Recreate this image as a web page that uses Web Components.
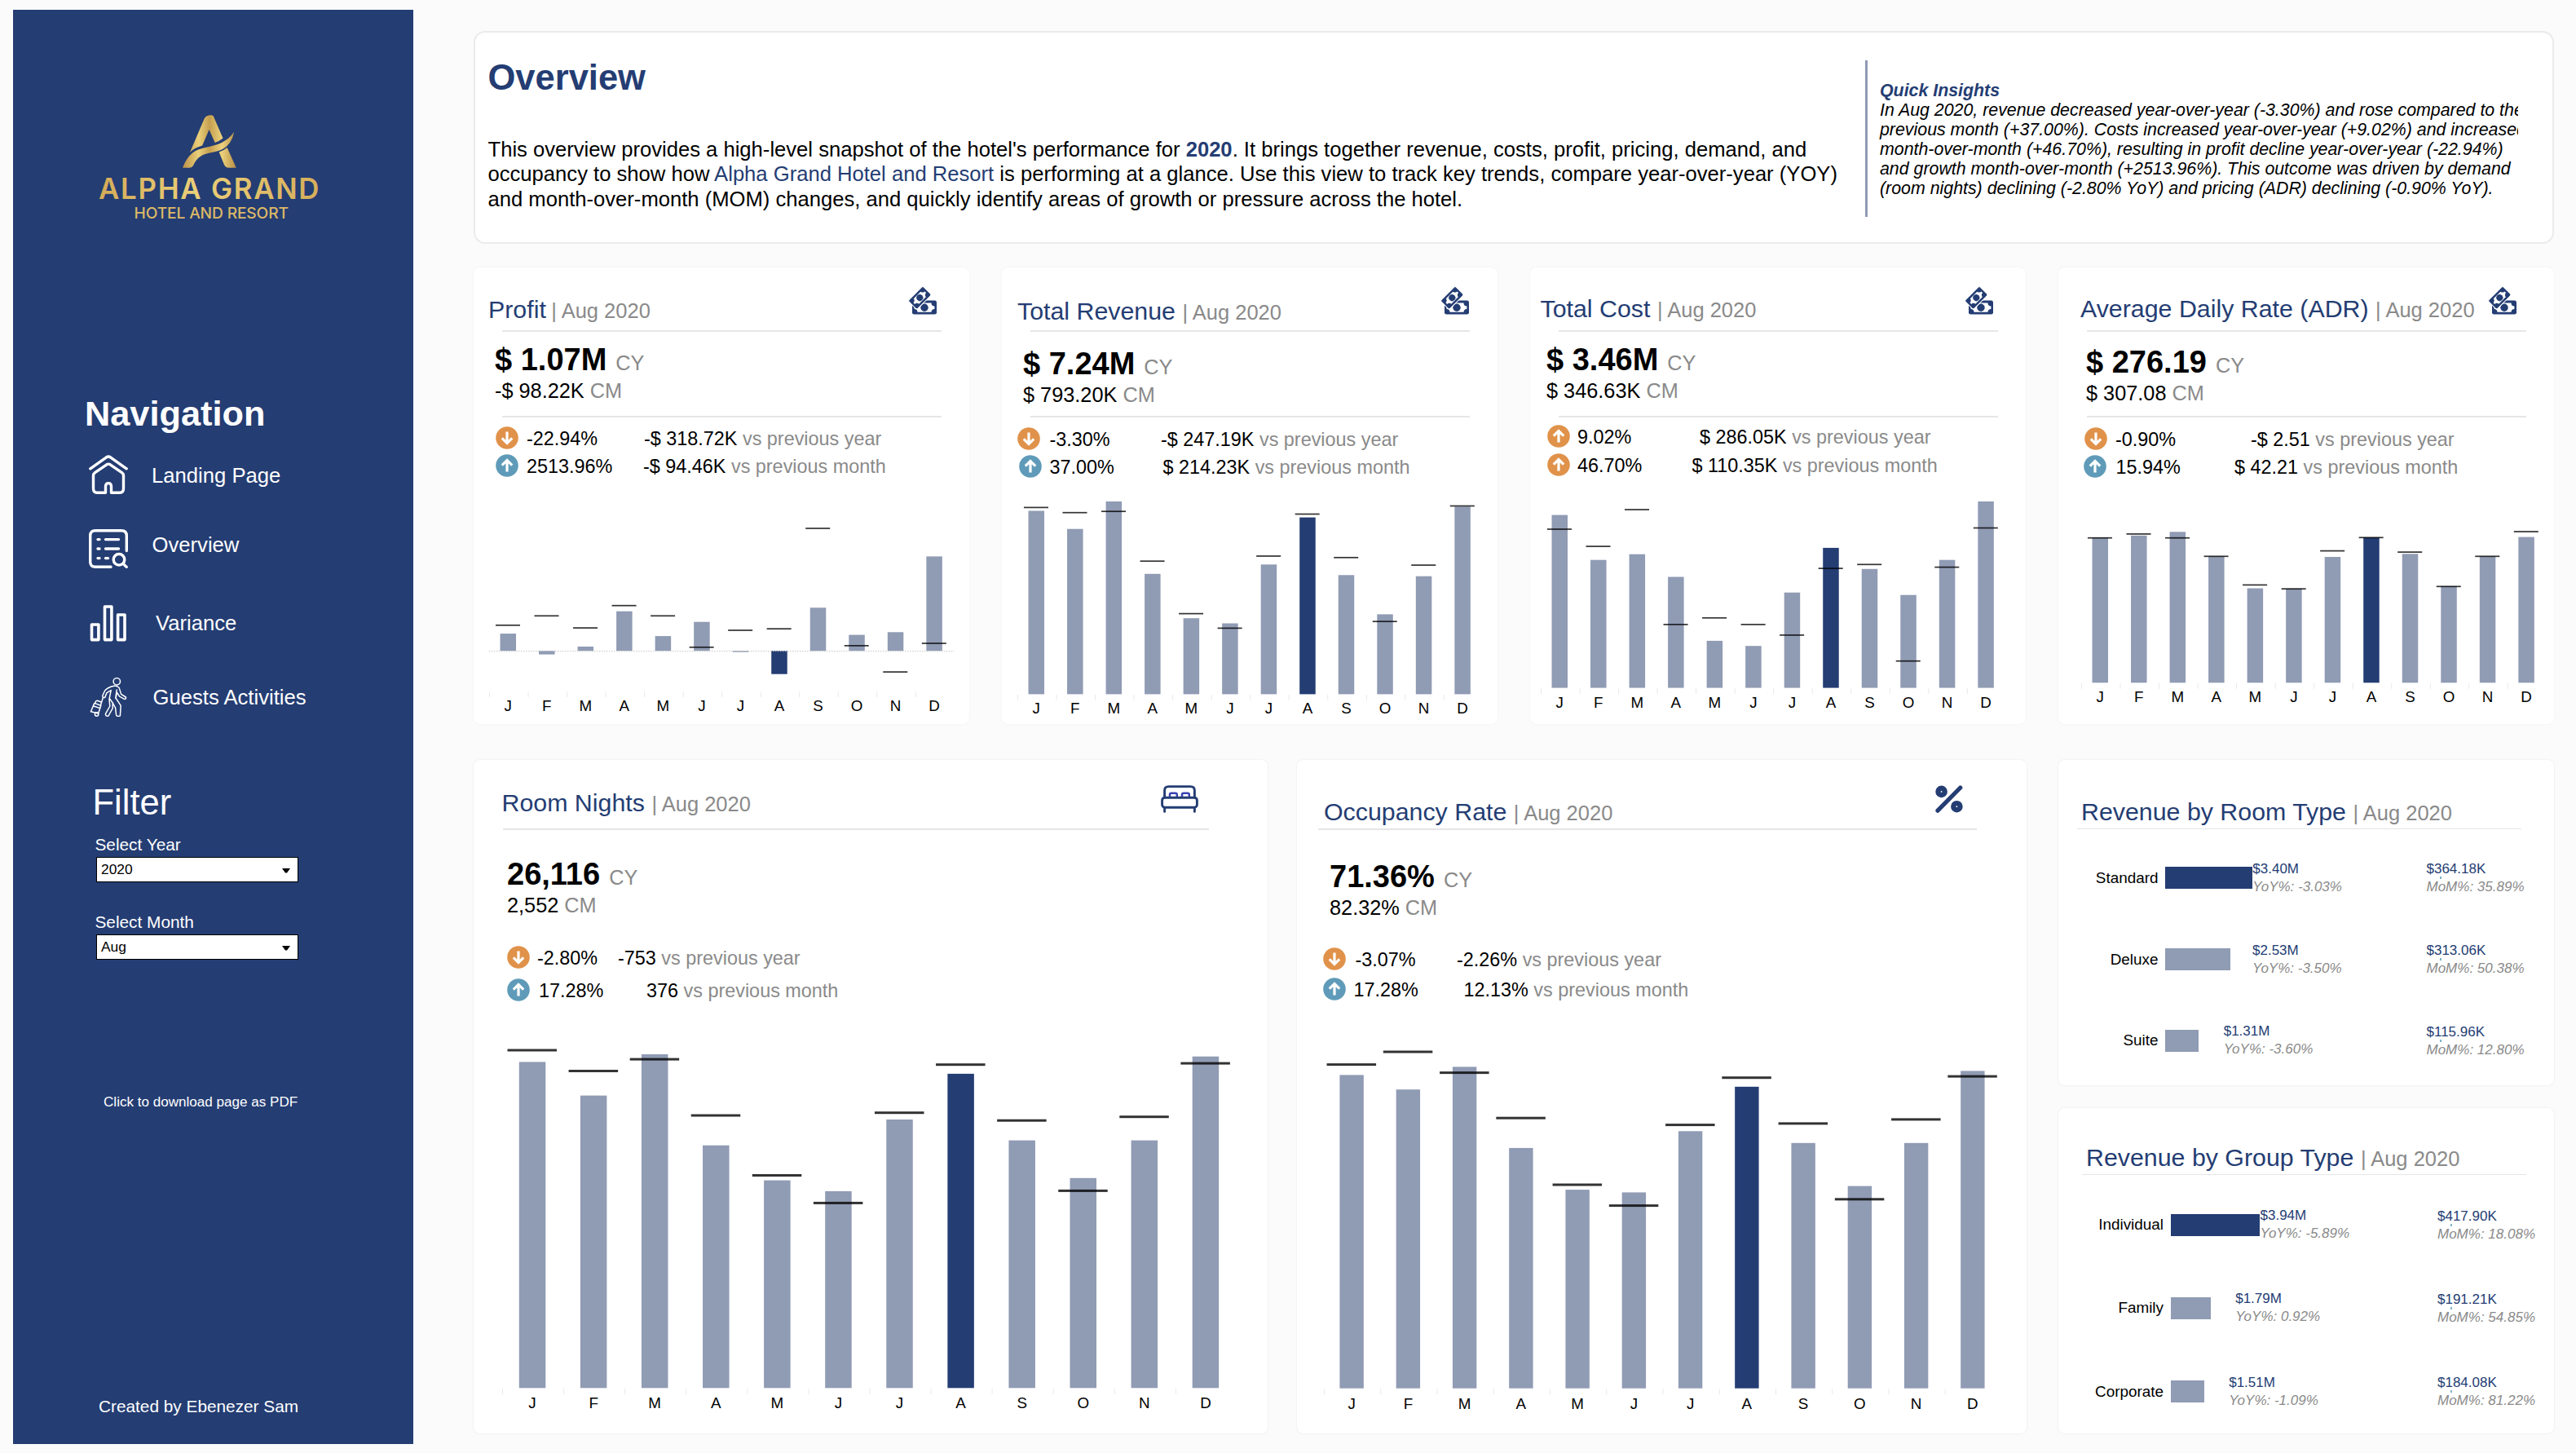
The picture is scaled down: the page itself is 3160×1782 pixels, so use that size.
<!DOCTYPE html>
<html lang="en">
<head>
<meta charset="utf-8">
<title>Alpha Grand Hotel and Resort - Overview</title>
<style>
    html, body { margin: 0; padding: 0; }

    body {
        --navy: #243d73;
        --slate: #909bb4;
        --muted: #8a8a8a;
        --rule: #e6e6e6;
        width: 3160px;
        height: 1782px;
        overflow: hidden;
        background: #fbfbfb;
        color: #000;
        font-family: "Liberation Sans", Arial, sans-serif;
    }
</style>
</head>
<body>
<hotel-dashboard></hotel-dashboard>

<script>
const MONTHS = ['J', 'F', 'M', 'A', 'M', 'J', 'J', 'A', 'S', 'O', 'N', 'D'];
const SELECTED_MONTH = 7;

const ICONS = {
    home: `<svg viewBox="0 0 48 48" width="48" height="48" fill="none" stroke="#fff" stroke-width="3.4" stroke-linecap="round" stroke-linejoin="round">
        <path d="M1.8 16.8 21.5 2.8Q24 1.2 26.5 2.8L46.2 16.8"/>
        <path d="M20.5 46.3H10Q5.5 46.3 5.5 41V25.5Q5.5 23 7.5 21.6L21.8 11.8Q24 10.4 26.2 11.8L40.5 21.6Q42.5 23 42.5 25.5V41Q42.5 46.3 38 46.3H27.5V38.5Q27.5 34.6 24 34.6T20.5 38.5Z"/>
    </svg>`,
    list: `<svg viewBox="0 0 48 48" width="48" height="48" fill="none" stroke="#fff" stroke-width="3.4" stroke-linecap="round">
        <path d="M27 46.3H8Q1.7 46.3 1.7 40V8Q1.7 1.7 8 1.7H40Q46.3 1.7 46.3 8V26.5"/>
        <path d="M11 12.6h2M20.5 12.6h16M11 24h2M20.5 24h16M11 35.6h2M20.5 35.6h3"/>
        <circle cx="37" cy="37.3" r="6.8"/>
        <path d="M42.3 42.6 46.2 46.4"/>
    </svg>`,
    bars: `<svg viewBox="0 0 48 48" width="48" height="48" fill="none" stroke="#fff" stroke-width="3.6" stroke-linejoin="round">
        <path d="M3.5 26h8.4v18.6H3.5zM19.5 4h8.4v40.6h-8.4zM35.6 14H44v30.6h-8.4z"/>
    </svg>`,
    guest: `<svg viewBox="0 0 48 48" width="48" height="48" fill="none" stroke="#fff" stroke-width="1.5" stroke-linecap="round" stroke-linejoin="round">
        <circle cx="34.3" cy="4.8" r="4.2"/>
        <path d="M31 10.3Q24 11.5 19.6 16L16.7 22.5Q16.8 24.8 19.6 24.6L22 18.6 27.2 15.6 25 26.4 25.8 35 20.4 44.6Q20.6 47.8 24 47L29.2 37.6V31L32.6 37.2 33.6 46Q35 48.6 38.4 46.8L39.2 34.4 33 25 34.6 18.4 37.6 23.2 44 26.6Q46 26 45.4 24L39.6 20.4 37.2 12.6Q35.4 9.8 31 10.3M25.4 25.6 29.2 31M32.8 25.2 34.2 15"/>
        <path d="M6.8 31.4 14.8 34.2 11.6 44 2.4 41.8ZM8.2 31.6Q7.6 28.4 10.4 28.2L14.4 29.8M6 35l7.8 2.6M17.4 24.6 14.4 34"/>
        <circle cx="9.6" cy="45" r="2.2"/>
    </svg>`,
    money: `<svg viewBox="0 0 35 35" width="35" height="35">
        <rect x="5" y="17.6" width="30" height="17" rx="2.4" fill="#243d73"/>
        <path d="M11.5 20.6H28.5A4 4 0 0 0 32.4 24.6V28A4 4 0 0 0 28.5 31.8H11.5A4 4 0 0 0 7.6 28V24.6A4 4 0 0 0 11.5 20.6Z" fill="#fff"/>
        <circle cx="20" cy="26.3" r="4.7" fill="#243d73"/>
        <g transform="translate(14.3 14.2) rotate(-45)">
            <rect x="-12.8" y="-7.6" width="25.6" height="15.2" rx="2.2" fill="#243d73" stroke="#fff" stroke-width="1"/>
            <path d="M-6-4.6H6A4 4 0 0 0 9.8-1.2V1.2A4 4 0 0 0 6 4.6H-6A4 4 0 0 0-9.8 1.2V-1.2A4 4 0 0 0-6-4.600Z" fill="#fff"/>
            <circle r="4" fill="#243d73"/>
        </g>
    </svg>`,
    bed: `<svg viewBox="0 0 46 34" width="46" height="34" fill="none" stroke="#243d73" stroke-width="2.9" stroke-linecap="round" stroke-linejoin="round">
        <path d="M4.6 15V6.5Q4.6 1.6 9.6 1.6H36.4Q41.4 1.6 41.4 6.5V15"/>
        <path d="M11 14.6V11.6Q11 9.8 12.8 9.8H18Q19.8 9.8 19.8 11.6V14.6M26 14.6V11.6Q26 9.8 27.8 9.8H33Q34.8 9.8 34.8 11.6V14.6" stroke="#3a42b4" stroke-width="2.5"/>
        <rect x="1.6" y="15.2" width="42.8" height="12" rx="3.2"/>
        <path d="M4.6 27.4V32.4M41.4 27.4V32.4"/>
    </svg>`,
    percent: `<svg viewBox="0 0 34 34" width="34" height="34" fill="none" stroke="#243d73" stroke-linecap="round">
        <path d="M3 31.2 30.8 3" stroke-width="5.2"/>
        <circle cx="7.6" cy="7.9" r="4.1" stroke-width="6.4"/>
        <circle cx="26.4" cy="26.2" r="4.1" stroke-width="6.4"/>
    </svg>`
};

class BrandLogo extends HTMLElement {
    constructor() {
        super();
        this.attachShadow({ mode: 'open' });
    }

    connectedCallback() {
        this.shadowRoot.innerHTML = `
            <style>
                :host { display: block; }
                svg { display: block; }
                text { font-family: Inter, Lato, "Liberation Sans", sans-serif; }
            </style>
            <svg width="491" height="140" viewBox="16 141 491 140">
                <defs>
                    <linearGradient id="mark" x1="224" x2="290" y1="0" y2="0" gradientUnits="userSpaceOnUse">
                        <stop offset="0" stop-color="#b98f48"/>
                        <stop offset=".3" stop-color="#ebd07a"/>
                        <stop offset=".5" stop-color="#c59f50"/>
                        <stop offset=".73" stop-color="#ecd27c"/>
                        <stop offset="1" stop-color="#b48a45"/>
                    </linearGradient>
                    <linearGradient id="word" x1="121" x2="391" y1="0" y2="0" gradientUnits="userSpaceOnUse">
                        <stop offset="0" stop-color="#d4ab58"/>
                        <stop offset=".45" stop-color="#ebd07a"/>
                        <stop offset="1" stop-color="#d6ae5a"/>
                    </linearGradient>
                </defs>
                <g fill="url(#mark)" transform="translate(0 141)">
                    <path d="M233 45.7 250 6Q252 .4 258 .2 260.8 0 261.8 1.5L273.500 28.500Q268.500 32.600 263.700 34L256.500 18 248.200 37.500Q239 40 233 45.700Z"/>
                    <path d="M224 64.700Q231 46.500 244 42.200C258 37.500 275 38 287.300 20.700Q284 36.500 272.500 42.200C260 48 246 44 238 60Q236.500 64.700 232 64.700Z"/>
                    <path d="M268.600 45.600Q274 44 278.600 40L289.800 64.700H280.500Q276.500 64.500 275 61Z"/>
                </g>
                <text x="121" y="243.700" font-size="34.800" font-weight="600" fill="url(#word)" textLength="270.500" lengthAdjust="spacing">ALPHA GRAND</text>
                <text x="164.500" y="267.800" font-size="19.200" font-weight="500" fill="#dcb967" textLength="189.500" lengthAdjust="spacing">HOTEL AND RESORT</text>
            </svg>
        `;
    }
}

customElements.define('brand-logo', BrandLogo);

class NavItem extends HTMLElement {
    constructor() {
        super();
        this.attachShadow({ mode: 'open' });
    }

    connectedCallback() {
        this.shadowRoot.innerHTML = `
            <style>
                :host {
                    display: flex;
                    align-items: center;
                    height: 91px;
                    padding-left: 93px;
                    font-size: 25.650px;
                    color: #fff;
                    cursor: pointer;
                }
                svg { display: block; flex: none; }
                span { padding-left: var(--gap, 29px); padding-top: var(--down, 0); padding-bottom: var(--up, 0); }
            </style>
            ${ICONS[this.getAttribute('icon')]}
            <span><slot></slot></span>
        `;
    }
}

customElements.define('nav-item', NavItem);

class FilterSelect extends HTMLElement {
    constructor() {
        super();
        this.attachShadow({ mode: 'open' });
    }

    connectedCallback() {
        this.shadowRoot.innerHTML = `
            <style>
                :host { display: block; padding-left: 100px; width: 251px; }
                .label { line-height: 26px; font-size: 20.800px; padding-left: .5px; }
                .box {
                    display: flex;
                    align-items: center;
                    justify-content: space-between;
                    box-sizing: border-box;
                    width: 248px;
                    height: 31px;
                    margin: 2px 0 0 2px;
                    padding: 0 9px 0 5px;
                    border: 1px solid #000;
                    background: #fff;
                    color: #000;
                    font-size: 17.400px;
                }
                svg { margin-top: 3px; }
            </style>
            <div class="label">${this.getAttribute('label')}</div>
            <div class="box">
                <slot></slot>
                <svg width="10" height="6" viewBox="0 0 10 6"><path d="M0 0h10L6 5.500H4z"/></svg>
            </div>
        `;
    }
}

customElements.define('filter-select', FilterSelect);

class SideBar extends HTMLElement {
    constructor() {
        super();
        this.attachShadow({ mode: 'open' });
    }

    connectedCallback() {
        this.shadowRoot.innerHTML = `
            <style>
                :host {
                    display: flex;
                    flex-direction: column;
                    box-sizing: border-box;
                    width: 491px;
                    height: 1759px;
                    padding: 129px 0 33px;
                    background: var(--navy);
                    color: #fff;
                }
                h2 { margin: 0; font-size: 43.500px; line-height: 50px; }
                .nav-title { margin-top: 201px; padding-left: 88px; font-size: 43.300px; }
                nav { margin-top: 4px; }
                .filter-title { margin-top: 59px; padding-left: 97.500px; font-weight: normal; }
                .year { margin-top: 14px; }
                .month { margin-top: 36px; }
                .pdf { margin-top: 163px; padding-left: 111px; font-size: 17.080px; line-height: 24px; }
                .author { margin-top: auto; padding-left: 105px; font-size: 20.800px; line-height: 26px; }
            </style>
            <brand-logo></brand-logo>
            <h2 class="nav-title">Navigation</h2>
            <nav>
                <nav-item icon="home" style="--down: 4px">Landing Page</nav-item>
                <nav-item icon="list" style="--up: 8px; --gap: 29.500px">Overview</nav-item>
                <nav-item icon="bars" style="--gap: 34px; --down: 2px">Variance</nav-item>
                <nav-item icon="guest" style="--gap: 30.500px; --down: 2px">Guests Activities</nav-item>
            </nav>
            <h2 class="filter-title">Filter</h2>
            <filter-select class="year" label="Select Year">2020</filter-select>
            <filter-select class="month" label="Select Month">Aug</filter-select>
            <div class="pdf">Click to download page as PDF</div>
            <div class="author">Created by Ebenezer Sam</div>
        `;
    }
}

customElements.define('side-bar', SideBar);

class OverviewHeader extends HTMLElement {
    constructor() {
        super();
        this.attachShadow({ mode: 'open' });
    }

    connectedCallback() {
        this.shadowRoot.innerHTML = `
            <style>
                :host {
                    display: flex;
                    box-sizing: border-box;
                    width: 2552px;
                    height: 261px;
                    border: 2px solid #ebebeb;
                    border-radius: 14px;
                    background: #fff;
                }
                .intro { width: 1705px; padding: 30px 0 0 15.500px; box-sizing: border-box; white-space: nowrap; }
                h1 { margin: 0 0 48px; font-size: 43.500px; line-height: 50px; color: var(--navy); }
                p { margin: 0; font-size: 25.610px; line-height: 30.400px; }
                b, .hotel { color: var(--navy); }
                .insights {
                    width: 801px;
                    height: 192px;
                    margin-top: 34px;
                    padding: 24.600px 0 0 15px;
                    box-sizing: border-box;
                    border-left: 3px solid var(--slate);
                    overflow: hidden;
                    white-space: nowrap;
                    font-size: 21.350px;
                    font-style: italic;
                    line-height: 24.050px;
                }
            </style>
            <div class="intro">
                <h1>Overview</h1>
                <p>This overview provides a high-level snapshot of the hotel's performance for <b>2020</b>. It brings together revenue, costs, profit, pricing, demand, and<br>
                occupancy to show how <span class="hotel">Alpha Grand Hotel and Resort</span> is performing at a glance. Use this view to track key trends, compare year-over-year (YOY)<br>
                and month-over-month (MOM) changes, and quickly identify areas of growth or pressure across the hotel.</p>
            </div>
            <div class="insights">
                <b>Quick Insights</b><br>
                In Aug 2020, revenue decreased year-over-year (-3.30%) and rose compared to the<br>
                previous month (+37.00%). Costs increased year-over-year (+9.02%) and increased<br>
                month-over-month (+46.70%), resulting in profit decline year-over-year (-22.94%)<br>
                and growth month-over-month (+2513.96%). This outcome was driven by demand<br>
                (room nights) declining (-2.80% YoY) and pricing (ADR) declining (-0.90% YoY).
            </div>
        `;
    }
}

customElements.define('overview-header', OverviewHeader);

// Heading, period and the thin line under them; shared by every card
class CardTitle extends HTMLElement {
    constructor() {
        super();
        this.attachShadow({ mode: 'open' });
    }

    connectedCallback() {
        const icon = this.getAttribute('icon');
        this.shadowRoot.innerHTML = `
            <style>
                :host {
                    display: flex;
                    justify-content: space-between;
                    box-sizing: border-box;
                    height: var(--head, 77px);
                    flex: none;
                }
                .text {
                    display: flex;
                    align-items: baseline;
                    height: 36px;
                    margin: var(--title-top) 0 0 var(--title-left);
                    line-height: 36px;
                    white-space: nowrap;
                }
                .name { font-size: 30.350px; color: var(--navy); }
                .period { margin-left: var(--period-gap, 8.500px); font-size: 25.500px; color: var(--muted); }
                .icon { margin: var(--icon-top, 23px) var(--icon-right) 0 0; }
                svg { display: block; }
            </style>
            <div class="text">
                <span class="name"><slot></slot></span>
                <span class="period">| Aug 2020</span>
            </div>
            ${icon ? `<div class="icon">${ICONS[icon]}</div>` : ''}
        `;
    }
}

customElements.define('card-title', CardTitle);

class ChangeRow extends HTMLElement {
    constructor() {
        super();
        this.attachShadow({ mode: 'open' });
    }

    connectedCallback() {
        const up = this.getAttribute('direction') === 'up';
        const color = this.hasAttribute('good') ? '#5f9bb9' : '#e0924a';
        this.shadowRoot.innerHTML = `
            <style>
                :host {
                    display: flex;
                    align-items: center;
                    height: var(--row, 34.300px);
                    padding-left: var(--x, 27px);
                    font-size: 23.400px;
                    line-height: 34px;
                    white-space: nowrap;
                }
                svg { flex: none; margin-top: -2px; }
                .percent { box-sizing: border-box; width: var(--col, 152px); padding-left: var(--pad, 10px); flex: none; }
                .note { color: var(--muted); }
            </style>
            <svg width="28" height="28" viewBox="0 0 28 28">
                <circle cx="14" cy="14" r="13.800" fill="${color}"/>
                <path d="${up ? 'M14 21.500V8M7.800 13.600 14 7.400l6.200 6.200' : 'M14 6.500V20M7.800 14.400 14 20.600l6.200-6.200'}" fill="none" stroke="#fff" stroke-width="3.200"/>
            </svg>
            <span class="percent"><slot></slot></span>
            <span>${this.getAttribute('delta')} <span class="note">vs previous ${this.getAttribute('versus')}</span></span>
        `;
    }
}

customElements.define('change-row', ChangeRow);

// Monthly columns with a tick for the previous year's value
class MonthChart extends HTMLElement {
    constructor() {
        super();
        this.attachShadow({ mode: 'open' });
    }

    connectedCallback() {
        const num = (name, fallback) => parseFloat(this.getAttribute(name) || fallback);
        const list = name => this.getAttribute(name).split(',').map(Number);
        const bars = list('bars');
        const marks = list('marks');
        const pitch = num('pitch', 47.53);
        const barWidth = num('bar-width', 19.5);
        const markWidth = num('mark-width', 30);
        const stroke = num('mark-stroke', 1.7);
        const floor = num('floor', 0);
        const labelDrop = num('label-drop', 24);
        const plot = Math.max(...bars, ...marks) + 4;
        const axis = plot + floor;
        const width = pitch * 12;

        let shapes = '';
        MONTHS.forEach((month, i) => {
            const cx = pitch * (i + 0.5) - 0.5;
            const h = bars[i];
            shapes += `<rect x="${cx - barWidth / 2}" y="${plot - Math.max(h, 0)}" width="${barWidth}" height="${Math.abs(h)}" fill="${i === SELECTED_MONTH ? '#243d73' : '#909bb4'}"/>`;
            shapes += `<rect x="${pitch * i}" y="${axis + 0.5}" width="1" height="7" fill="#e9e9e9"/>`;
            shapes += `<text x="${cx}" y="${axis + labelDrop}">${month}</text>`;
        });
        marks.forEach((m, i) => {
            const cx = pitch * (i + 0.5) - 0.8;
            shapes += `<rect x="${cx - markWidth / 2}" y="${plot - m - stroke / 2}" width="${markWidth}" height="${stroke}" fill="#000" fill-opacity=".8"/>`;
        });
        if (floor) {
            shapes += `<line x1="0" x2="${width}" y1="${plot + 0.5}" y2="${plot + 0.5}" stroke="#c4c4c4" stroke-dasharray="1.500 1.500"/>`;
        }

        this.shadowRoot.innerHTML = `
            <style>
                :host { display: block; margin-top: auto; }
                svg { display: block; overflow: visible; }
                text { font-family: "Liberation Sans", Arial, sans-serif; font-size: 18.800px; text-anchor: middle; }
            </style>
            <svg width="${width}" height="${axis + 30}">${shapes}</svg>
        `;
    }
}

customElements.define('month-chart', MonthChart);

class KpiCard extends HTMLElement {
    constructor() {
        super();
        this.attachShadow({ mode: 'open' });
    }

    connectedCallback() {
        this.shadowRoot.innerHTML = `
            <style>
                :host {
                    display: flex;
                    flex-direction: column;
                    box-sizing: border-box;
                    width: var(--width, 608px);
                    height: var(--height, 560px);
                    padding-bottom: var(--bottom);
                    border-radius: 8px;
                    background: #fff;
                    box-shadow: 0 0 3px rgba(0, 0, 0, .05);
                }
                .rule { height: 1.500px; width: var(--rule-width, 539px); margin-left: var(--rule-left, 35px); flex: none; background: var(--rule); }
                .figures { box-sizing: border-box; height: var(--figures, 103px); padding: var(--value-top) 0 0 var(--value-left); flex: none; white-space: nowrap; }
                .current { display: flex; align-items: baseline; height: 40px; line-height: 40px; }
                .current b { font-size: 38px; }
                .unit { margin-left: 11px; font-size: 25.300px; color: var(--muted); }
                .month { font-size: 25.300px; line-height: 36.500px; }
                .month span { color: var(--muted); }
                .second { height: 2px; background: var(--second, var(--rule)); }
                .changes { padding-top: var(--changes-top); }
                .chart { display: flex; margin-top: auto; padding-left: var(--chart-left); }
            </style>
            <card-title icon="${this.getAttribute('icon')}">${this.getAttribute('heading')}</card-title>
            <div class="rule"></div>
            <div class="figures">
                <div class="current"><b>${this.getAttribute('current')}</b><span class="unit">CY</span></div>
                <div class="month">${this.getAttribute('month')} <span>CM</span></div>
            </div>
            <div class="rule second"></div>
            <div class="changes"><slot></slot></div>
            <div class="chart"><slot name="chart"></slot></div>
        `;
    }
}

customElements.define('kpi-card', KpiCard);

class RevenueRow extends HTMLElement {
    constructor() {
        super();
        this.attachShadow({ mode: 'open' });
    }

    connectedCallback() {
        const get = name => this.getAttribute(name);
        this.shadowRoot.innerHTML = `
            <style>
                :host { display: flex; align-items: center; height: var(--row-height); white-space: nowrap; }
                .label { width: var(--label); text-align: right; font-size: 18.900px; margin-right: 8.500px; flex: none; }
                .measure { display: flex; align-items: center; width: var(--measure); flex: none; }
                .bar { width: ${get('bar')}px; height: 27px; background: ${this.hasAttribute('top') ? 'var(--navy)' : 'var(--slate)'}; }
                .amount { margin-left: ${get('gap')}px; }
                .amount, .monthly { font-size: 17px; line-height: 22px; color: var(--navy); }
                .monthly { padding-top: 1px; }
                i { display: block; color: var(--muted); }
                .dot { display: block; width: 2px; height: 3px; margin: -2px 0 -1px 16px; background: #7fb3c8; }
            </style>
            <div class="label"><slot></slot></div>
            <div class="measure">
                <div class="bar"></div>
                <div class="amount">${get('amount')}<i>YoY%: ${get('yoy')}</i></div>
            </div>
            <div class="monthly">${get('monthly')}<span class="dot"></span><i>MoM%: ${get('mom')}</i></div>
        `;
    }
}

customElements.define('revenue-row', RevenueRow);

class RevenueCard extends HTMLElement {
    constructor() {
        super();
        this.attachShadow({ mode: 'open' });
    }

    connectedCallback() {
        this.shadowRoot.innerHTML = `
            <style>
                :host {
                    display: block;
                    width: 608px;
                    height: 399px;
                    border-radius: 8px;
                    background: #fff;
                    box-shadow: 0 0 3px rgba(0, 0, 0, .08);
                }
                .rule { height: 1px; width: 545px; margin-left: var(--rule-left); background: var(--rule); }
                .rows { padding-top: 10px; }
            </style>
            <card-title>${this.getAttribute('heading')}</card-title>
            <div class="rule"></div>
            <div class="rows"><slot></slot></div>
        `;
    }
}

customElements.define('revenue-card', RevenueCard);

class HotelDashboard extends HTMLElement {
    constructor() {
        super();
        this.attachShadow({ mode: 'open' });
    }

    connectedCallback() {
        this.shadowRoot.innerHTML = `
            <style>
                :host { display: flex; align-items: flex-start; }
                side-bar { margin: 12px 0 0 16px; flex: none; }
                main { margin: 38px 0 0 74px; }
                .row { display: flex; }
                .top { gap: 40px; margin-top: 29px; }
                .bottom { margin-top: 44px; }
                .side { display: flex; flex-direction: column; gap: 28px; margin-left: 39px; }

                .top .profit { --title-top: 34px; --title-left: 18px; --period-gap: 6.500px; --icon-right: 40px; --value-top: 14px; --value-left: 26px; --changes-top: 9px; --bottom: 10px; --chart-left: 19px; }
                .top .revenue { --title-top: 36px; --title-left: 19px; --icon-right: 35px; --value-top: 19.500px; --value-left: 26px; --changes-top: 10px; --bottom: 6.500px; --chart-left: 19.300px; }
                .top .cost { --title-top: 32.500px; --title-left: 12.500px; --icon-right: 40px; --value-top: 14px; --value-left: 20px; --changes-top: 7px; --bottom: 14px; --chart-left: 13px; --row: 35px; --x: 21px; }
                .top .adr { --title-top: 32.500px; --title-left: 27px; --icon-right: 46px; --value-top: 17px; --value-left: 34px; --changes-top: 10px; --bottom: 20.500px; --chart-left: 27.500px; }

                .bottom kpi-card {
                    --height: 826px;
                    --head: 84px;
                    --icon-top: 31px;
                    --figures: 124px;
                    --second: transparent;
                    --bottom: 25.500px;
                    box-shadow: 0 0 3px rgba(0, 0, 0, .08);
                }
                .nights { --width: 974px; --title-top: 34.500px; --title-left: 34.500px; --icon-right: 85px; --rule-left: 36px; --rule-width: 866px; --value-top: 34.500px; --value-left: 41px; --changes-top: 11px; --chart-left: 35.300px; --row: 40px; --x: 40.500px; }
                .occupancy { --width: 895px; margin-left: 36px; --title-top: 45.500px; --title-left: 33px; --icon-right: 78px; --rule-left: 26px; --rule-width: 808px; --value-top: 37px; --value-left: 40px; --changes-top: 14.500px; --chart-left: 33px; --row: 37px; --x: 32px; }

                .rooms { --head: 84px; --title-top: 46px; --title-left: 28px; --rule-left: 22.500px; --row-height: 99.800px; --label: 122.500px; --measure: 320.500px; }
                .groups { --head: 81px; --title-top: 42.500px; --title-left: 34px; --rule-left: 28.500px; --row-height: 102.300px; --label: 129px; --measure: 327.500px; }
            </style>
            <side-bar></side-bar>
            <main>
                <overview-header></overview-header>

                <div class="row top">
                    <kpi-card class="profit" heading="Profit" icon="money" current="$ 1.07M" month="-$ 98.22K">
                        <change-row direction="down" delta="-$ 318.72K" versus="year" style="--col: 154px">-22.94%</change-row>
                        <change-row direction="up" good delta="-$ 94.46K" versus="month" style="--col: 153px">2513.96%</change-row>
                        <month-chart slot="chart" floor="49.5"
                            bars="21.1,-4.4,5.2,48.5,18.1,35.5,-1.5,-28.5,52.9,19.6,22.9,115.8"
                            marks="31.4,42.9,28.1,55.5,42.9,4.4,25.2,27,150.2,6.3,-25.9,9.2"></month-chart>
                    </kpi-card>
                    <kpi-card class="revenue" heading="Total Revenue" icon="money" current="$ 7.24M" month="$ 793.20K">
                        <change-row direction="down" delta="-$ 247.19K" versus="year" style="--x: 19px; --pad: 11.500px; --col: 148px">-3.30%</change-row>
                        <change-row direction="up" good delta="$ 214.23K" versus="month" style="--x: 20.500px; --pad: 10px; --col: 149px">37.00%</change-row>
                        <month-chart slot="chart" label-drop="23.3"
                            bars="224.9,202.7,236.4,147.6,93.2,86.9,159.1,216.8,146.1,98,144.7,230.1"
                            marks="229,222.7,224.2,163.2,98.8,81,169.4,220.9,167.6,89.2,158.3,230.9"></month-chart>
                    </kpi-card>
                    <kpi-card class="cost" heading="Total Cost" icon="money" current="$ 3.46M" month="$ 346.63K">
                        <change-row direction="up" delta="$ 286.05K" versus="year" style="--pad: 9px; --col: 159px">9.02%</change-row>
                        <change-row direction="up" delta="$ 110.35K" versus="month" style="--pad: 9px; --col: 149.500px">46.70%</change-row>
                        <month-chart slot="chart"
                            bars="212,156.9,163.9,136.1,57.7,51.4,116.9,171.7,145.8,113.9,156.9,228.6"
                            marks="194.6,173.5,218.6,77.7,85.8,77.7,64.7,146.5,151.3,32.9,148,196.1"></month-chart>
                    </kpi-card>
                    <kpi-card class="adr" heading="Average Daily Rate (ADR)" icon="money" current="$ 276.19" month="$ 307.08">
                        <change-row direction="down" delta="-$ 2.51" versus="year" style="--x: 32px; --col: 176px">-0.90%</change-row>
                        <change-row direction="up" good delta="$ 42.21" versus="month" style="--x: 30.500px; --pad: 12px; --col: 157.500px">15.94%</change-row>
                        <month-chart slot="chart"
                            bars="178,180.5,185,155,115.8,115.4,154.3,178,158,118.4,155,178.7"
                            marks="177.6,182.4,177.6,155,119.9,115.1,161.7,178,160.2,118,155,185.3"></month-chart>
                    </kpi-card>
                </div>

                <div class="row bottom">
                    <kpi-card class="nights" heading="Room Nights" icon="bed" current="26,116" month="2,552">
                        <change-row direction="down" delta="-753" versus="year" style="--pad: 9.500px; --col: 108.500px">-2.80%</change-row>
                        <change-row direction="up" good delta="376" versus="month" style="--pad: 11.500px; --col: 143.500px">17.28%</change-row>
                        <month-chart slot="chart" pitch="75.08" bar-width="32.5" mark-width="60.5" mark-stroke="3" label-drop="25.1"
                            bars="399.9,358.7,409.3,297.6,254.7,241.4,329.3,385.4,303.7,257.5,303.7,406.6"
                            marks="414.3,388.8,403.2,334.3,260.8,226.9,337.6,396.6,328.1,241.9,332.6,398.2"></month-chart>
                    </kpi-card>
                    <kpi-card class="occupancy" heading="Occupancy Rate" icon="percent" current="71.36%" month="82.32%">
                        <change-row direction="down" delta="-2.26%" versus="year" style="--pad: 11.500px; --col: 136px">-3.07%</change-row>
                        <change-row direction="up" good delta="12.13%" versus="month" style="--pad: 9.500px; --col: 144.500px">17.28%</change-row>
                        <month-chart slot="chart" pitch="69.25" bar-width="29.4" mark-width="60.5" mark-stroke="3" label-drop="25.1"
                            bars="384.3,366.5,394.3,294.8,243.6,240.3,315.4,369.9,300.9,248.1,300.9,389.3"
                            marks="397.1,412.7,387.1,331.5,249.7,224.1,323.1,381,324.8,231.9,329.8,382.6"></month-chart>
                    </kpi-card>
                    <div class="side">
                        <revenue-card class="rooms" heading="Revenue by Room Type">
                            <revenue-row top bar="107.3" gap="0" amount="$3.40M" yoy="-3.03%" monthly="$364.18K" mom="35.89%">Standard</revenue-row>
                            <revenue-row bar="80" gap="27" amount="$2.53M" yoy="-3.50%" monthly="$313.06K" mom="50.38%">Deluxe</revenue-row>
                            <revenue-row bar="41.2" gap="30.5" amount="$1.31M" yoy="-3.60%" monthly="$115.96K" mom="12.80%">Suite</revenue-row>
                        </revenue-card>
                        <revenue-card class="groups" heading="Revenue by Group Type">
                            <revenue-row top bar="109" gap="1" amount="$3.94M" yoy="-5.89%" monthly="$417.90K" mom="18.08%">Individual</revenue-row>
                            <revenue-row bar="49.7" gap="30" amount="$1.79M" yoy="0.92%" monthly="$191.21K" mom="54.85%">Family</revenue-row>
                            <revenue-row bar="41.7" gap="30" amount="$1.51M" yoy="-1.09%" monthly="$184.08K" mom="81.22%">Corporate</revenue-row>
                        </revenue-card>
                    </div>
                </div>
            </main>
        `;
    }
}

customElements.define('hotel-dashboard', HotelDashboard);
</script>
</body>
</html>
